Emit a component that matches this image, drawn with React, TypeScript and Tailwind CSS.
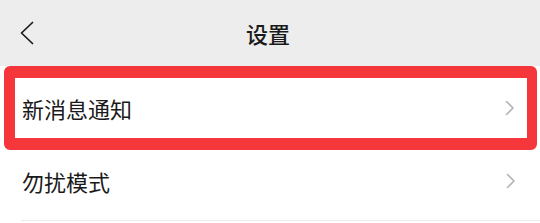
const font = { fontFamily: '"Noto Sans CJK SC", "Noto Sans", sans-serif' };

function Chevron() {
  return (
    <svg width="10" height="16" viewBox="0 0 10 16" fill="none">
      <path d="M1.5 1.5 L8 8 L1.5 14.5" stroke="#b4b4b4" strokeWidth="1.6" strokeLinecap="round" strokeLinejoin="round" />
    </svg>
  );
}

export default function App() {
  return (
    <div className="w-[540px] h-[223px] bg-white overflow-hidden text-[#1a1a1a]" style={font}>
      {/* Header */}
      <div className="h-[66px] bg-[#ededed] flex items-center relative">
        <div className="pl-[20px] flex items-center">
          <svg width="14" height="24" viewBox="0 0 14 24" fill="none">
            <path d="M12.5 1.5 L1.5 12 L12.5 22.5" stroke="#1a1a1a" strokeWidth="1.7" strokeLinecap="round" strokeLinejoin="round" />
          </svg>
        </div>
        <div className="absolute inset-0 flex items-center justify-center pr-[4px]">
          <span className="text-[22px] font-medium leading-none">设置</span>
        </div>
      </div>

      {/* Highlighted row */}
      <div className="mx-[4px] w-[533px] h-[84px] border-[12px] border-l-[11px] border-r-[10px] border-[#f5363a] rounded-[6px] flex items-center justify-between pl-[7px] pr-[12px]">
        <span className="text-[22px] leading-none">新消息通知</span>
        <Chevron />
      </div>

      {/* Second row */}
      <div className="h-[70px] flex items-center justify-between pl-[22px] pr-[24px] pb-[8px]">
        <span className="text-[22px] leading-none">勿扰模式</span>
        <Chevron />
      </div>
      <div className="ml-[21px] h-px bg-[#ececec]" />
    </div>
  );
}
